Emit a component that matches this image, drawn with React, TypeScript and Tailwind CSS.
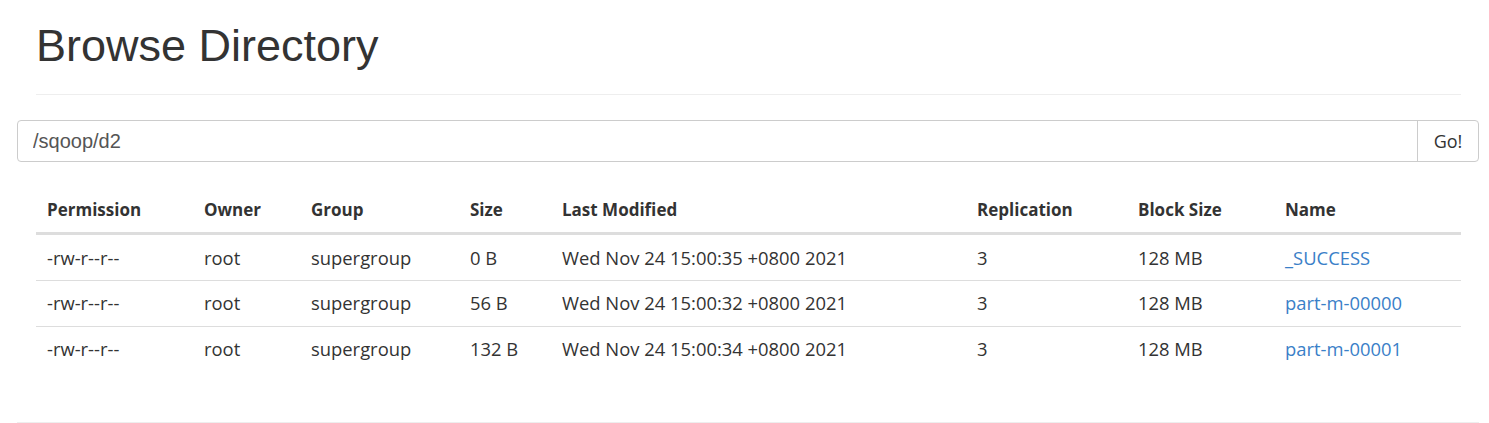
const rows = [
  { perm: "-rw-r--r--", owner: "root", group: "supergroup", size: "0 B", modified: "Wed Nov 24 15:00:35 +0800 2021", repl: "3", block: "128 MB", name: "_SUCCESS" },
  { perm: "-rw-r--r--", owner: "root", group: "supergroup", size: "56 B", modified: "Wed Nov 24 15:00:32 +0800 2021", repl: "3", block: "128 MB", name: "part-m-00000" },
  { perm: "-rw-r--r--", owner: "root", group: "supergroup", size: "132 B", modified: "Wed Nov 24 15:00:34 +0800 2021", repl: "3", block: "128 MB", name: "part-m-00001" },
];

const cols = [
  { key: "perm", label: "Permission", w: "w-[157px]" },
  { key: "owner", label: "Owner", w: "w-[107px]" },
  { key: "group", label: "Group", w: "w-[159px]" },
  { key: "size", label: "Size", w: "w-[92px]" },
  { key: "modified", label: "Last Modified", w: "w-[415px]" },
  { key: "repl", label: "Replication", w: "w-[161px]" },
  { key: "block", label: "Block Size", w: "w-[147px]" },
  { key: "name", label: "Name", w: "" },
] as const;

export default function App() {
  return (
    <div className="min-h-[423px] bg-white text-[#333] pl-[17px] w-[1479px]">
      <div className="px-[19px] pr-[18px]">
        <h1 className="pt-[18px] pb-[20px] text-[45px] leading-[56px] font-normal font-['Liberation_Sans',Arial,sans-serif] text-[#333]">
          Browse Directory
        </h1>
        <div className="border-b border-[#eee]" />
      </div>

      <div className="mt-[25px] flex h-[42px] rounded-[4px] border border-[#ccc]">
        <input
          type="text"
          defaultValue="/sqoop/d2"
          className="flex-1 px-[15px] text-[20px] text-[#555] outline-none bg-transparent font-['Liberation_Sans',Arial,sans-serif]"
        />
        <button className="w-[61px] border-l border-[#ccc] text-[18px] text-[#333] font-['Open_Sans',sans-serif]">
          Go!
        </button>
      </div>

      <div className="px-[19px] pr-[18px] mt-[25px] font-['Open_Sans',sans-serif] text-[18.4px]">
        <table className="w-full border-collapse text-left">
          <thead>
            <tr className="border-b-[3px] border-[#ddd]">
              {cols.map((c) => (
                <th key={c.key} className={`${c.w} h-[46px] px-[11px] text-[17px] font-bold align-middle`}>
                  {c.label}
                </th>
              ))}
            </tr>
          </thead>
          <tbody>
            {rows.map((r, i) => (
              <tr key={i} className={i < rows.length - 1 ? "border-b border-[#ddd]" : ""}>
                {cols.map((c) => (
                  <td key={c.key} className={`${i === 0 ? "h-[47px] pt-[1px]" : "h-[46px]"} px-[11px] align-middle`}>
                    {c.key === "name" ? (
                      <a href="#" className="text-[#3a80c8]">{r[c.key]}</a>
                    ) : (
                      r[c.key]
                    )}
                  </td>
                ))}
              </tr>
            ))}
          </tbody>
        </table>
      </div>

      <div className="mt-[50px] border-b border-[#eee]" />
    </div>
  );
}
